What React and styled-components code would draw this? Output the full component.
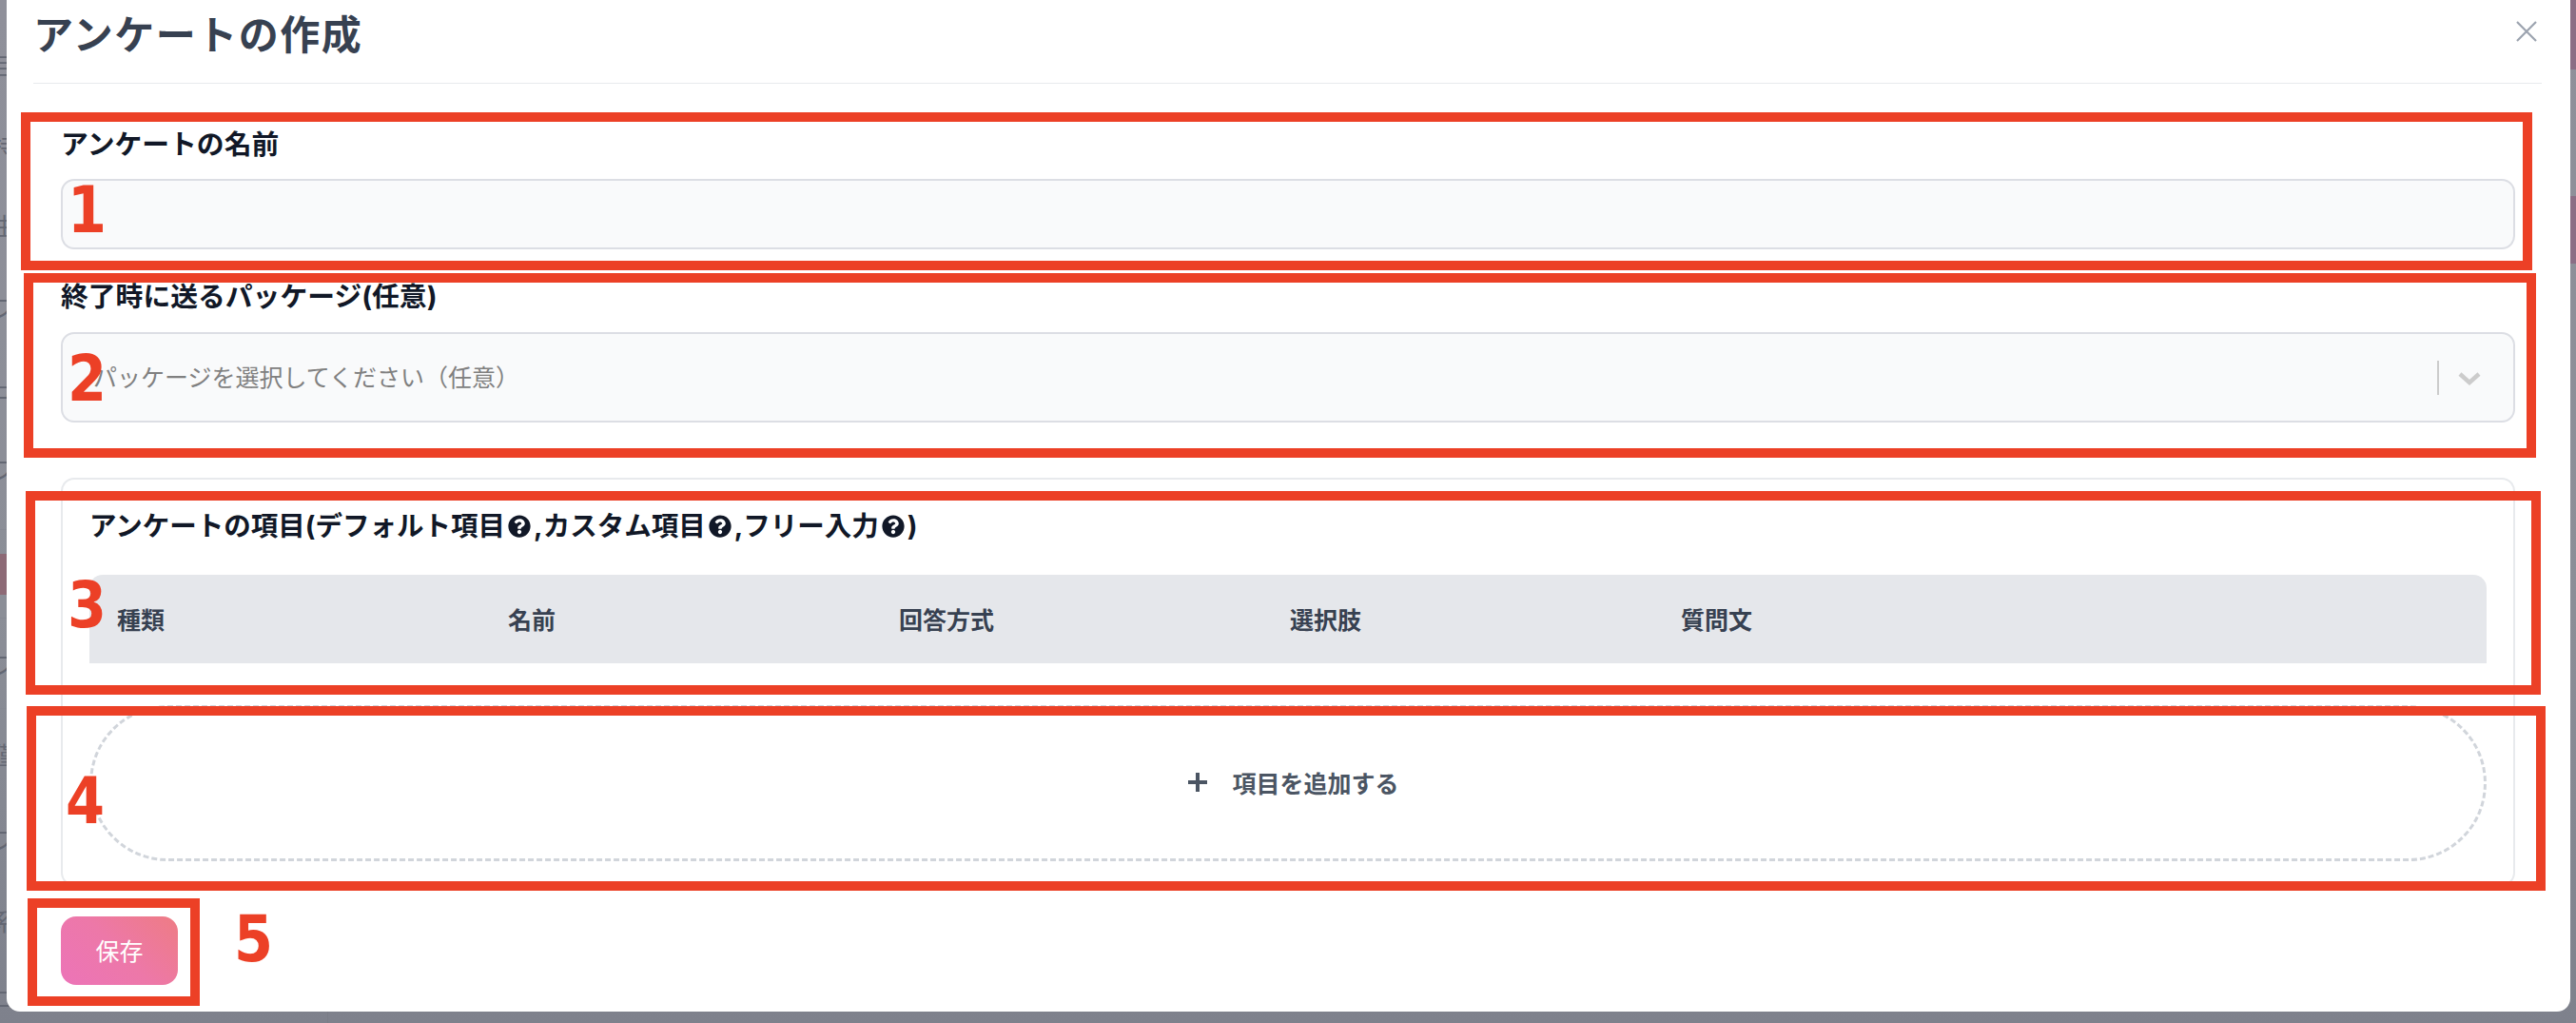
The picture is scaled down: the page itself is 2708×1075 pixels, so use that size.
import React from "react";
import styled, { createGlobalStyle } from "styled-components";
import { FaQuestionCircle } from "react-icons/fa";

const Global = createGlobalStyle`
  html, body { margin: 0; padding: 0; height: 100%; overflow: hidden; }
  body { font-family: "Inter", "Noto Sans CJK JP", sans-serif; background: #868993; }
  * { box-sizing: border-box; }
`;

const Page = styled.div`
  position: relative;
  width: 2708px;
  height: 1075px;
  overflow: hidden;
  display: flex;
  background: linear-gradient(180deg, #8f909a 0%, #8b8e97 60%, #7e818c 100%);
`;

const Sidebar = styled.nav`
  width: 345px;
  flex: none;
  padding-top: 26px;
  display: flex;
  flex-direction: column;
  border-right: 1px solid #7a7d87;
`;

const NavRow = styled.div`
  height: ${(p) => p.$h}px;
  flex: none;
  display: flex;
  align-items: center;
  padding-bottom: ${(p) => p.$shift || 0}px;
  margin-left: -8px;
  font-size: 25px;
  letter-spacing: 5px;
  color: #636773;
  white-space: nowrap;
  border-bottom: ${(p) => (p.$line ? "1px solid #868993" : "none")};
`;

const NavActive = styled.div`
  width: 300px;
  height: 43px;
  margin-left: 0;
  background: #8d6a76;
`;

const Main = styled.main`
  flex: 1;
  display: flex;
  flex-direction: column;
  align-items: flex-end;
`;

const Tag = styled.div`
  width: 160px;
  height: ${(p) => p.$h}px;
  margin-bottom: ${(p) => p.$mb || 0}px;
  background: #8b6e85;
`;

const Modal = styled.section`
  position: absolute;
  left: 7px;
  right: 6px;
  top: -20px;
  bottom: 12px;
  background: #ffffff;
  border-radius: 14px;
  padding: 0 30px 0 28px;
  display: flex;
  flex-direction: column;
`;

const Header = styled.header`
  display: flex;
  justify-content: space-between;
  align-items: flex-start;
  height: 108px;
  padding: 34px 5px 0 0;
  border-bottom: 1.5px solid #e8eaed;
`;

const Title = styled.h2`
  margin: 0;
  font-size: 42px;
  line-height: 46px;
  letter-spacing: 1.5px;
  font-weight: 700;
  color: #374151;
`;

const Close = styled.button`
  width: 22px;
  height: 22px;
  margin-top: 8px;
  padding: 0;
  border: 0;
  background: none;
  color: #9ca3af;
  display: flex;
`;

const Body = styled.div`
  padding: 44px 28px 0 29px;
  display: flex;
  flex-direction: column;
`;

const Field = styled.div`
  display: flex;
  flex-direction: column;
  gap: ${(p) => p.$gap}px;
  margin-bottom: ${(p) => p.$mb}px;
`;

const Label = styled.label`
  font-size: 28.8px;
  line-height: 40px;
  font-weight: 700;
  color: #111827;
`;

const TextInput = styled.div`
  height: 74px;
  background: #f9fafb;
  border: 2px solid #dcdee4;
  border-radius: 14px;
`;

const Select = styled.div`
  height: 95px;
  background: #f9fafb;
  border: 2px solid #dcdee4;
  border-radius: 14px;
  display: flex;
  align-items: center;
  padding: 0 17px 0 32px;
`;

const Placeholder = styled.span`
  flex: 1;
  font-size: 25px;
  color: #808080;
  padding-bottom: 3px;
`;

const Separator = styled.span`
  width: 2px;
  height: 36px;
  background: #cccccc;
  margin-right: 17px;
`;

const Chevron = styled.svg`
  width: 30px;
  height: 30px;
  margin-right: 14px;
  fill: none;
  stroke: #cccccc;
  stroke-width: 4.5;
`;

const Card = styled.div`
  border: 2px solid #e8eaed;
  border-radius: 14px;
  padding: 29px 28px 25px 28px;
  height: 429px;
`;

const CardTitle = styled.h3`
  margin: 0 0 31px;
  font-size: 28.5px;
  line-height: 40px;
  font-weight: 700;
  color: #111827;
  display: flex;
  align-items: center;
  white-space: nowrap;
`;

const Help = styled(FaQuestionCircle)`
  width: 24px;
  height: 24px;
  margin: 0 3px;
  color: #111827;
`;

const TableHead = styled.div`
  height: 93px;
  background: #e5e7eb;
  border-radius: 14px 14px 0 0;
  display: grid;
  grid-template-columns: repeat(5, 411px) 1fr;
  align-items: center;
  padding-left: 29px;
  margin-bottom: 44px;
`;

const Th = styled.div`
  font-size: 25px;
  font-weight: 700;
  color: #374151;
  padding-bottom: 2px;
`;

const AddButton = styled.button`
  width: 100%;
  height: 164px;
  background: #fff;
  border: 3px dashed #d1d5db;
  border-radius: 82px;
  padding: 0 0 3px 9px;
  display: flex;
  align-items: center;
  justify-content: center;
  gap: 23px;
  font-family: inherit;
  font-size: 25px;
  font-weight: 700;
  color: #4b5563;
`;

const Plus = styled.svg`
  width: 26px;
  height: 26px;
  fill: none;
  stroke: #4b5563;
  stroke-width: 4;
`;

const SaveRow = styled.div`
  margin-top: 32px;
`;

const Save = styled.button`
  width: 123px;
  height: 72px;
  border: 0;
  border-radius: 16px;
  padding: 0 0 3px;
  font-family: inherit;
  font-size: 25px;
  color: #ffffff;
  background: linear-gradient(45deg, #ec74b8 0%, #ed78a8 50%, #ee7c84 100%);
`;

/* Red review marks lying over the screenshot */
const Mark = styled.div`
  position: absolute;
  left: ${(p) => p.$x}px;
  top: ${(p) => p.$y}px;
  width: ${(p) => p.$w}px;
  height: ${(p) => p.$h}px;
  border: 10px solid #ec4026;
`;

const Num = styled.span`
  position: absolute;
  left: ${(p) => p.$x}px;
  top: ${(p) => p.$y}px;
  font-family: "DejaVu Sans", "Liberation Sans", sans-serif;
  font-size: 67px;
  line-height: 50px;
  font-weight: 700;
  color: #ec4026;
  transform: scaleX(0.88);
  transform-origin: left center;
`;

const navRows = [
  { h: 84, t: "目" }, { h: 84, t: "持" }, { h: 84, t: "生" }, { h: 87, t: "フ" },
  { h: 86, t: "ュ" }, { h: 106, t: "フ", shift: 24, line: true }, { h: 93, active: true, line: true },
  { h: 95, t: "フ", line: true }, { h: 93, t: "僅" }, { h: 86, t: "フ" }, { h: 86, t: "系" },
  { h: 90, t: "コンテンツ", shift: 14 },
];

const marks = [
  { x: 22, y: 118, w: 2640, h: 166 },
  { x: 25, y: 287, w: 2641, h: 194 },
  { x: 27, y: 516, w: 2644, h: 214 },
  { x: 28, y: 742, w: 2648, h: 194 },
  { x: 29, y: 944, w: 181, h: 113 },
];

const nums = [
  { x: 71, y: 196, t: "1" },
  { x: 71, y: 373, t: "2" },
  { x: 71, y: 611, t: "3" },
  { x: 69, y: 817, t: "4" },
  { x: 246, y: 962, t: "5" },
];

export default function App() {
  return (
    <Page>
      <Global />
      <Sidebar>
        {navRows.map((r, i) => (
          <NavRow key={i} $h={r.h} $shift={r.shift} $line={r.line}>
            {r.active ? <NavActive /> : r.t}
          </NavRow>
        ))}
      </Sidebar>
      <Main>
        <Tag $h={73} $mb={133} />
        <Tag $h={71} />
      </Main>
      <Modal>
        <Header>
          <Title>アンケートの作成</Title>
          <Close aria-label="閉じる">
            <svg width="22" height="22" viewBox="0 0 22 22" fill="none" stroke="currentColor" strokeWidth="2.2">
              <path d="M1 1 21 21M21 1 1 21" />
            </svg>
          </Close>
        </Header>
        <Body>
          <Field $gap={16} $mb={30}>
            <Label>アンケートの名前</Label>
            <TextInput />
          </Field>
          <Field $gap={17} $mb={58}>
            <Label>終了時に送るパッケージ(任意)</Label>
            <Select>
              <Placeholder>パッケージを選択してください（任意）</Placeholder>
              <Separator />
              <Chevron viewBox="0 0 30 30">
                <path d="M5 11 15 20 25 11" />
              </Chevron>
            </Select>
          </Field>
          <Card>
            <CardTitle>
              アンケートの項目(デフォルト項目<Help />,カスタム項目<Help />,フリー入力<Help />)
            </CardTitle>
            <TableHead>
              {["種類", "名前", "回答方式", "選択肢", "質問文", ""].map((h, i) => (
                <Th key={i}>{h}</Th>
              ))}
            </TableHead>
            <AddButton>
              <Plus viewBox="0 0 26 26">
                <path d="M13 3V23M3 13H23" />
              </Plus>
              項目を追加する
            </AddButton>
          </Card>
          <SaveRow>
            <Save>保存</Save>
          </SaveRow>
        </Body>
      </Modal>
      {marks.map((m, i) => (
        <Mark key={i} $x={m.x} $y={m.y} $w={m.w} $h={m.h} />
      ))}
      {nums.map((n) => (
        <Num key={n.t} $x={n.x} $y={n.y}>{n.t}</Num>
      ))}
    </Page>
  );
}
